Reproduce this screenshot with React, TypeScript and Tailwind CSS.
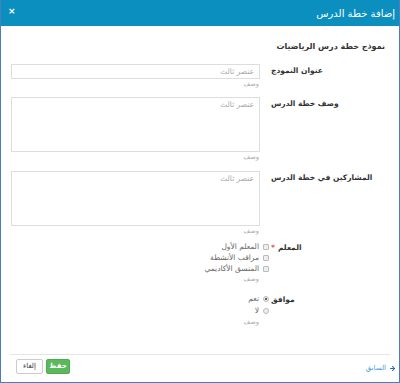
import { ArrowRight } from "lucide-react";

function Help() {
  return <div className="h-[10px] text-[6.5px] leading-[10px] text-[#aaa]">وصف</div>;
}

function Row({ label, children, star }: { label: string; children: React.ReactNode; star?: boolean }) {
  return (
    <div className="flex items-start">
      <div className="w-[131px] shrink-0 pl-[11px] pt-[1px] text-left text-[7.5px] leading-[12px] font-bold text-[#333]">
        {label}
        {star && <span className="text-[#e05050] mr-[3px]">*</span>}
      </div>
      <div className="flex-1">{children}</div>
    </div>
  );
}

function Check({ text }: { text: string }) {
  return (
    <div className="flex items-center h-[11px] gap-[4px] mr-[-9px]">
      <span className="w-[6px] h-[6px] border border-[#bbb] bg-[#eee] rounded-[1px]" />
      <span className="text-[7.5px] text-[#666]">{text}</span>
    </div>
  );
}

function Radio({ text, checked }: { text: string; checked?: boolean }) {
  return (
    <div className="flex items-center h-[12px] gap-[4px] mr-[-9px]">
      <span className="w-[6px] h-[6px] rounded-full border border-[#bbb] bg-[#eee] flex items-center justify-center">
        {checked && <span className="w-[2px] h-[2px] rounded-full bg-[#333]" />}
      </span>
      <span className="text-[7.5px] text-[#666]">{text}</span>
    </div>
  );
}

export default function App() {
  return (
    <div dir="rtl" className="w-[400px] h-[383px] bg-white flex flex-col border-x border-b border-[#4a7cc2]" style={{ fontFamily: '"DejaVu Sans", sans-serif' }}>
      <div className="h-[26px] shrink-0 bg-[#0b8fbe] flex justify-between pr-[4px] pl-[7px]">
        <div className="text-[10px] leading-[28px] text-white">إضافة خطة الدرس</div>
        <div className="text-[9px] leading-[22px] font-bold text-white">×</div>
      </div>

      <div className="flex-1 pl-[10px] pr-[8px]">
        <div className="mt-[14px] h-[14px] pr-[6px] text-[8px] leading-[14px] font-bold text-[#333]">
          نموذج خطة درس الرياضيات
        </div>

        <div className="mt-[10px]">
          <Row label="عنوان النموذج">
            <div className="h-[15px] border border-[#ddd] pr-[5px] text-[7.5px] leading-[13px] text-[#aaa]">عنصر ثالث</div>
            <div className="pr-[1px]"><Help /></div>
          </Row>
        </div>

        <div className="mt-[8px]">
          <Row label="وصف خطة الدرس">
            <div className="h-[55px] border border-[#ddd] pr-[5px] pt-[1px] text-[7.5px] leading-[12px] text-[#aaa]">عنصر ثالث</div>
            <div className="pr-[1px]"><Help /></div>
          </Row>
        </div>

        <div className="mt-[9px]">
          <Row label="المشاركين في خطة الدرس">
            <div className="h-[55px] border border-[#ddd] pr-[5px] pt-[1px] text-[7.5px] leading-[12px] text-[#aaa]">عنصر ثالث</div>
            <div className="pr-[1px]"><Help /></div>
          </Row>
        </div>

        <div className="mt-[5px]">
          <Row label="المعلم" star>
            <Check text="المعلم الأول" />
            <Check text="مراقب الأنشطة" />
            <Check text="المنسق الأكاديمي" />
            <div className="pr-[1px]"><Help /></div>
          </Row>
        </div>

        <div className="mt-[9px]">
          <Row label="موافق">
            <Radio text="نعم" checked />
            <Radio text="لا" />
            <div className="pr-[1px]"><Help /></div>
          </Row>
        </div>
      </div>

      <div className="mx-[9px] border-t border-[#e5e5e5]" />
      <div className="h-[27px] shrink-0 flex items-start justify-between pt-[4px] pr-[3px] pl-[15px]">
        <a className="flex items-center gap-[3px] mt-[4px] text-[7px] text-[#3f9bd6]">
          <ArrowRight size={7} strokeWidth={3.5} className="text-[#1f6fb5]" />
          السابق
        </a>
        <div className="flex gap-[3px]">
          <button className="h-[15px] w-[24px] rounded-[2px] bg-[#5cb85c] border border-[#4cae4c] text-[7px] font-bold text-white">حفظ</button>
          <button className="h-[15px] w-[27px] rounded-[2px] bg-white border border-[#ccc] text-[7px] text-[#333]">إلغاء</button>
        </div>
      </div>
    </div>
  );
}
